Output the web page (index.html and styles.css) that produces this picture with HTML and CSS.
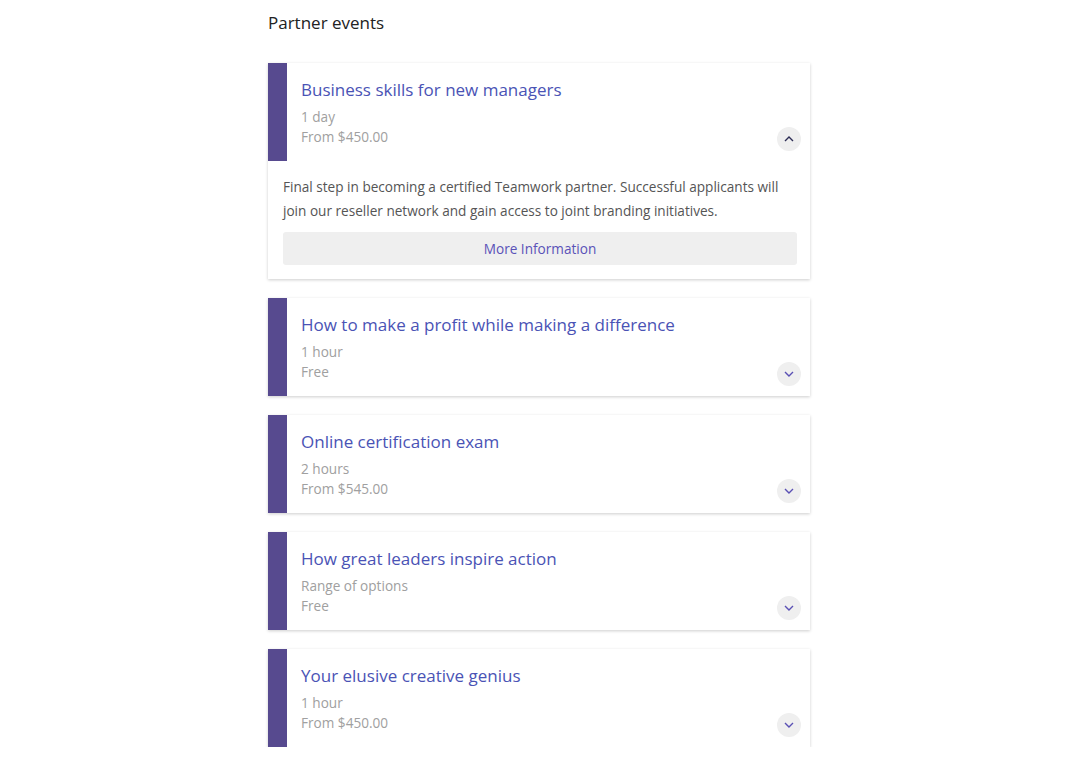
FILE: index.html
```html
<!DOCTYPE html>
<html>
<head>
<meta charset="utf-8">
<link rel="stylesheet" href="styles.css">
</head>
<body>
<div class="page">
  <h1 class="heading">Partner events</h1>
  <div class="list">
    <div class="card">
      <div class="head">
        <div class="bar"></div>
        <div class="info">
          <div class="title">Business skills for new managers</div>
          <div class="meta">1 day</div>
          <div class="meta">From $450.00</div>
        </div>
        <button class="toggle open"><svg width="10" height="6" viewBox="0 0 10 6"><path d="M1 5 L5 1 L9 5" fill="none" stroke="#2d2d55" stroke-width="1.4"/></svg></button>
      </div>
      <div class="body">
        <p class="desc">Final step in becoming a certified Teamwork partner. Successful applicants will join our reseller network and gain access to joint branding initiatives.</p>
        <button class="more">More Information</button>
      </div>
    </div>
    <div class="card">
      <div class="head">
        <div class="bar"></div>
        <div class="info">
          <div class="title">How to make a profit while making a difference</div>
          <div class="meta">1 hour</div>
          <div class="meta">Free</div>
        </div>
        <button class="toggle"><svg width="10" height="6" viewBox="0 0 10 6"><path d="M1 1 L5 5 L9 1" fill="none" stroke="#5a50b4" stroke-width="1.4"/></svg></button>
      </div>
    </div>
    <div class="card">
      <div class="head">
        <div class="bar"></div>
        <div class="info">
          <div class="title">Online certification exam</div>
          <div class="meta">2 hours</div>
          <div class="meta">From $545.00</div>
        </div>
        <button class="toggle"><svg width="10" height="6" viewBox="0 0 10 6"><path d="M1 1 L5 5 L9 1" fill="none" stroke="#5a50b4" stroke-width="1.4"/></svg></button>
      </div>
    </div>
    <div class="card">
      <div class="head">
        <div class="bar"></div>
        <div class="info">
          <div class="title">How great leaders inspire action</div>
          <div class="meta">Range of options</div>
          <div class="meta">Free</div>
        </div>
        <button class="toggle"><svg width="10" height="6" viewBox="0 0 10 6"><path d="M1 1 L5 5 L9 1" fill="none" stroke="#5a50b4" stroke-width="1.4"/></svg></button>
      </div>
    </div>
    <div class="card">
      <div class="head">
        <div class="bar"></div>
        <div class="info">
          <div class="title">Your elusive creative genius</div>
          <div class="meta">1 hour</div>
          <div class="meta">From $450.00</div>
        </div>
        <button class="toggle"><svg width="10" height="6" viewBox="0 0 10 6"><path d="M1 1 L5 5 L9 1" fill="none" stroke="#5a50b4" stroke-width="1.4"/></svg></button>
      </div>
    </div>
  </div>
</div>
</body>
</html>
```
FILE: styles.css
```css
* { box-sizing: border-box; }
body {
  margin: 0;
  background: #fff;
  font-family: "Open Sans", "Noto Sans", sans-serif;
}
.page {
  width: 542px;
  margin-left: 268px;
  padding-top: 11px;
}
.heading {
  margin: 0;
  font-size: 17px;
  font-weight: 400;
  line-height: 24px;
  color: #222;
}
.list {
  display: flex;
  flex-direction: column;
  gap: 19px;
  margin-top: 28px;
}
.card {
  background: #fff;
  box-shadow: 0 1px 3px rgba(0,0,0,0.2);
}
.head {
  display: flex;
  align-items: flex-end;
  height: 98px;
}
.bar {
  width: 19px;
  align-self: stretch;
  background: #574a8f;
}
.info {
  flex: 1;
  padding: 15px 0 14px 14px;
}
.title {
  font-size: 17px;
  line-height: 24px;
  color: #4a53b5;
  margin-bottom: 5px;
}
.meta {
  font-size: 13.6px;
  line-height: 20px;
  color: #a0a0a0;
}
.toggle {
  width: 24px;
  height: 24px;
  border: 0;
  border-radius: 50%;
  background: #efefef;
  margin: 0 9px 10px 0;
  padding: 0;
  display: flex;
  align-items: center;
  justify-content: center;
}
.body {
  padding: 14px 13px 14px 15px;
}
.desc {
  margin: 0;
  font-size: 13.6px;
  line-height: 24px;
  color: #555;
}
.more {
  display: block;
  width: 100%;
  height: 33px;
  margin-top: 9px;
  border: 0;
  border-radius: 3px;
  background: #efefef;
  font-family: "Open Sans", "Noto Sans", sans-serif;
  font-size: 13.6px;
  color: #5a52b8;
}
```
